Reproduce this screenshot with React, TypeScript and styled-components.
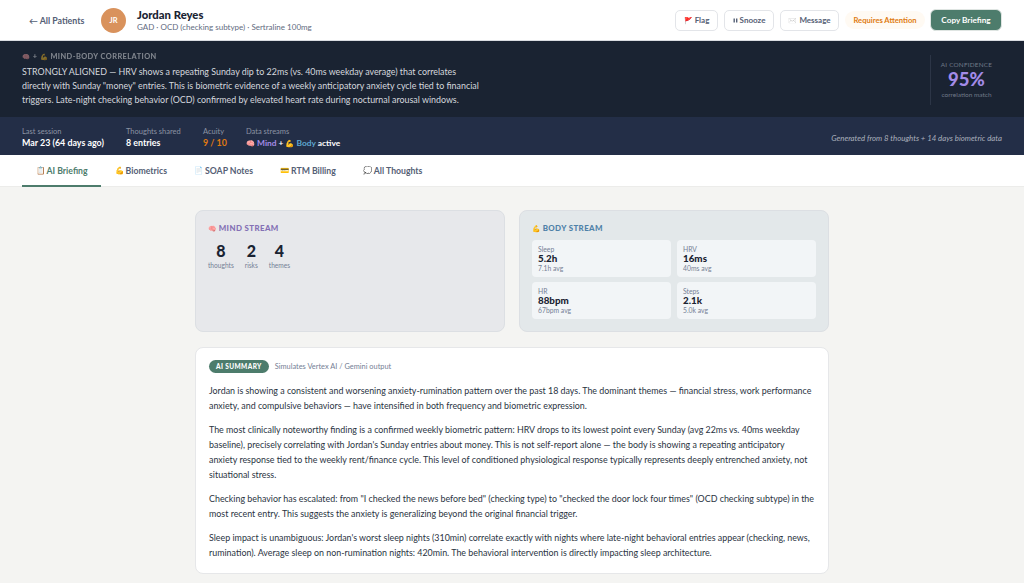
import React from 'react'
import styled, { createGlobalStyle } from 'styled-components'

const font = `Lato, "Noto Sans", "Liberation Sans", sans-serif`

const GlobalStyle = createGlobalStyle`
  html, body { margin: 0; padding: 0; height: 100%; background: #f4f4f2; overflow: hidden; }
  body { font-family: ${font}; color: #1a2332; }
  * { box-sizing: border-box; }
`

const Page = styled.div`
  display: flex;
  flex-direction: column;
  height: 583px;
  overflow: hidden;
`

const Emoji = styled.span<{ $muted?: boolean }>`
  font-size: 0.86em;
  ${p => p.$muted && 'filter: grayscale(1);'}
`

const TopBar = styled.header`
  display: flex;
  align-items: center;
  height: 41px;
  padding: 0 22px 0 29px;
  background: #fff;
  border-bottom: 1px solid #d9dce1;
`

const BackLink = styled.a`
  width: 72px;
  font-size: 8.8px;
  font-weight: 700;
  color: #556075;
`

const Avatar = styled.div`
  display: flex;
  align-items: center;
  justify-content: center;
  width: 25px;
  height: 25px;
  margin-right: 11px;
  border-radius: 50%;
  background: #d9925c;
  color: #fff;
  font-size: 7.5px;
  font-weight: 700;
`

const PatientInfo = styled.div`
  flex: 1;
`

const PatientName = styled.div`
  font-size: 11.3px;
  line-height: 14px;
  font-weight: 900;
  color: #1a2332;
`

const PatientMeta = styled.div`
  font-size: 8px;
  line-height: 11px;
  color: #5f6b80;
`

const Actions = styled.div`
  display: flex;
  align-items: center;
`

const ActionButton = styled.button<{ $width: number }>`
  display: flex;
  align-items: center;
  justify-content: center;
  gap: 2px;
  width: ${p => p.$width}px;
  height: 21px;
  margin-right: 6px;
  padding: 0;
  border: 1px solid #e3e5e9;
  border-radius: 5px;
  background: #fff;
  color: #556075;
  font-family: ${font};
  font-size: 8px;
  font-weight: 700;
`

const AttentionPill = styled.span`
  display: flex;
  justify-content: center;
  width: 80px;
  margin-right: 5px;
  padding: 4px 0;
  border-radius: 10px;
  background: #fffaf3;
  color: #e07b10;
  font-size: 7.6px;
  font-weight: 700;
`

const CopyButton = styled.button`
  width: 72px;
  height: 22px;
  padding: 0;
  border: 1px solid #dfe5e2;
  border-radius: 6px;
  background: #4d7c6c;
  color: #fff;
  font-family: ${font};
  font-size: 8.2px;
  font-weight: 700;
`

const CorrelationBand = styled.section`
  display: flex;
  justify-content: space-between;
  height: 76px;
  padding: 11px 22px 0;
  background: #1a2332;
`

const CorrelationLabel = styled.div`
  font-size: 7.4px;
  line-height: 10px;
  font-weight: 700;
  letter-spacing: 0.45px;
  color: #fff;
  opacity: 0.45;
`

const CorrelationText = styled.p`
  width: 470px;
  margin: 3px 0 0;
  font-size: 8.9px;
  line-height: 14px;
  white-space: nowrap;
  color: #d5d8de;
`

const ConfidenceBox = styled.div`
  display: flex;
  flex-direction: column;
  align-items: center;
  align-self: flex-start;
  width: 72px;
  height: 50px;
  margin-top: 3px;
  padding-top: 5px;
  border-left: 1px solid #2c3546;
`

const ConfidenceLabel = styled.div`
  font-size: 6.4px;
  line-height: 9px;
  letter-spacing: 0.2px;
  color: #717a89;
`

const ConfidenceValue = styled.div`
  font-size: 18.5px;
  line-height: 20px;
  font-weight: 900;
  color: #a38be8;
`

const ConfidenceSub = styled.div`
  margin-top: 2px;
  font-size: 6.5px;
  line-height: 8px;
  color: #717a89;
`

const MetaBand = styled.section`
  display: flex;
  align-items: center;
  height: 38px;
  padding: 4px 22px 0;
  background: #232e47;
`

const MetaItem = styled.div<{ $width: number }>`
  width: ${p => p.$width}px;
`

const MetaLabel = styled.div`
  font-size: 7.5px;
  line-height: 10px;
  color: #8b93a3;
`

const MetaValue = styled.div<{ $color?: string }>`
  font-size: 8.9px;
  line-height: 12px;
  font-weight: 700;
  color: ${p => p.$color || '#fff'};
`

const StreamsValue = styled(MetaValue)`
  font-size: 8.4px;
`

const Accent = styled.span<{ $color: string }>`
  color: ${p => p.$color};
`

const Generated = styled.div`
  margin-left: auto;
  font-size: 7.8px;
  font-style: italic;
  color: #aab0bc;
`

const Tabs = styled.nav`
  display: flex;
  height: 32px;
  padding: 0 22px;
  background: #fff;
  border-bottom: 1px solid #ececea;
`

const Tab = styled.a<{ $active?: boolean }>`
  display: flex;
  align-items: center;
  gap: 2px;
  height: 32px;
  padding: 0 13.5px;
  font-size: 8.7px;
  font-weight: 700;
  color: ${p => (p.$active ? '#4d7c6c' : '#556075')};
  border-bottom: 2px solid ${p => (p.$active ? '#4d7c6c' : 'transparent')};
`

const Content = styled.main`
  display: flex;
  flex-direction: column;
  gap: 15px;
  width: 634px;
  margin: 23px auto 0;
`

const Streams = styled.div`
  display: grid;
  grid-template-columns: 1fr 1fr;
  gap: 14px;
`

const StreamCard = styled.div<{ $bg: string }>`
  height: 122px;
  padding: 12px 12px 0;
  border: 1px solid #dcdfe3;
  border-radius: 8px;
  background: ${p => p.$bg};
`

const StreamTitle = styled.div<{ $color: string }>`
  font-size: 7.9px;
  line-height: 10px;
  font-weight: 900;
  letter-spacing: 0.4px;
  color: ${p => p.$color};
`

const Counts = styled.div`
  display: flex;
  gap: 11px;
  margin-top: 8px;
`

const Count = styled.div`
  text-align: center;
`

const CountValue = styled.div`
  font-size: 16px;
  line-height: 20px;
  font-weight: 900;
`

const CountLabel = styled.div`
  font-size: 6.6px;
  line-height: 9px;
  color: #758095;
`

const MetricGrid = styled.div`
  display: grid;
  grid-template-columns: 1fr 1fr;
  gap: 5px 6px;
  margin-top: 7px;
`

const Metric = styled.div`
  height: 37px;
  padding: 5px 6px 0;
  border-radius: 4px;
  background: #f2f5f7;
`

const MetricLabel = styled.div`
  font-size: 6.8px;
  line-height: 8px;
  color: #758095;
`

const MetricValue = styled.div`
  font-size: 9.8px;
  line-height: 11px;
  font-weight: 900;
`

const MetricSub = styled.div`
  font-size: 6.8px;
  line-height: 9px;
  color: #758095;
`

const SummaryCard = styled.article`
  height: 227px;
  padding: 12px 13px 0;
  border: 1px solid #e6e7e9;
  border-radius: 8px;
  background: #fff;
`

const SummaryHead = styled.div`
  display: flex;
  align-items: center;
  gap: 6px;
  margin-bottom: 10px;
`

const SummaryBadge = styled.span`
  padding: 1px 7px;
  border-radius: 7px;
  background: #4d7c6c;
  color: #fff;
  font-size: 6.5px;
  line-height: 11px;
  font-weight: 900;
  letter-spacing: 0.4px;
`

const SummaryNote = styled.span`
  font-size: 7.4px;
  color: #758095;
`

const SummaryText = styled.p`
  margin: 0 0 9px;
  font-size: 8.9px;
  line-height: 15px;
  white-space: nowrap;
  color: #2a3342;
`

const PauseIcon = () => (
  <svg width="5" height="5" viewBox="0 0 5 5" aria-hidden="true">
    <rect x="0.5" y="0.5" width="1.4" height="4" fill="#556075" />
    <rect x="3" y="0.5" width="1.4" height="4" fill="#556075" />
  </svg>
)

export default function App() {
  return (
    <Page>
      <GlobalStyle />
      <TopBar>
        <BackLink>← All Patients</BackLink>
        <Avatar>JR</Avatar>
        <PatientInfo>
          <PatientName>Jordan Reyes</PatientName>
          <PatientMeta>GAD · OCD (checking subtype) · Sertraline 100mg</PatientMeta>
        </PatientInfo>
        <Actions>
          <ActionButton $width={43}><Emoji>🚩</Emoji> Flag</ActionButton>
          <ActionButton $width={50}><PauseIcon /> Snooze</ActionButton>
          <ActionButton $width={59}><Emoji $muted>✉️</Emoji> Message</ActionButton>
          <AttentionPill>Requires Attention</AttentionPill>
          <CopyButton>Copy Briefing</CopyButton>
        </Actions>
      </TopBar>
      <CorrelationBand>
        <div>
          <CorrelationLabel><Emoji>🧠</Emoji> + <Emoji>💪</Emoji> MIND-BODY CORRELATION</CorrelationLabel>
          <CorrelationText>
            STRONGLY ALIGNED — HRV shows a repeating Sunday dip to 22ms (vs. 40ms weekday average) that correlates
            <br />
            directly with Sunday "money" entries. This is biometric evidence of a weekly anticipatory anxiety cycle tied
            to financial
            <br />
            triggers. Late-night checking behavior (OCD) confirmed by elevated heart rate during nocturnal arousal
            windows.
          </CorrelationText>
        </div>
        <ConfidenceBox>
          <ConfidenceLabel>AI CONFIDENCE</ConfidenceLabel>
          <ConfidenceValue>95%</ConfidenceValue>
          <ConfidenceSub>correlation match</ConfidenceSub>
        </ConfidenceBox>
      </CorrelationBand>
      <MetaBand>
        <MetaItem $width={104}>
          <MetaLabel>Last session</MetaLabel>
          <MetaValue>Mar 23 (64 days ago)</MetaValue>
        </MetaItem>
        <MetaItem $width={77}>
          <MetaLabel>Thoughts shared</MetaLabel>
          <MetaValue>8 entries</MetaValue>
        </MetaItem>
        <MetaItem $width={43}>
          <MetaLabel>Acuity</MetaLabel>
          <MetaValue $color="#e07b10">9 / 10</MetaValue>
        </MetaItem>
        <MetaItem $width={120}>
          <MetaLabel>Data streams</MetaLabel>
          <StreamsValue>
            <Emoji>🧠</Emoji> <Accent $color="#a38be8">Mind</Accent> + <Emoji>💪</Emoji>{' '}
            <Accent $color="#5fa8d3">Body</Accent> active
          </StreamsValue>
        </MetaItem>
        <Generated>Generated from 8 thoughts + 14 days biometric data</Generated>
      </MetaBand>
      <Tabs>
        <Tab $active><Emoji>📋</Emoji> AI Briefing</Tab>
        <Tab><Emoji>💪</Emoji> Biometrics</Tab>
        <Tab><Emoji>📄</Emoji> SOAP Notes</Tab>
        <Tab><Emoji>💳</Emoji> RTM Billing</Tab>
        <Tab><Emoji>💭</Emoji> All Thoughts</Tab>
      </Tabs>
      <Content>
        <Streams>
          <StreamCard $bg="#e7e8eb">
            <StreamTitle $color="#8470b5"><Emoji>🧠</Emoji> MIND STREAM</StreamTitle>
            <Counts>
              <Count>
                <CountValue>8</CountValue>
                <CountLabel>thoughts</CountLabel>
              </Count>
              <Count>
                <CountValue>2</CountValue>
                <CountLabel>risks</CountLabel>
              </Count>
              <Count>
                <CountValue>4</CountValue>
                <CountLabel>themes</CountLabel>
              </Count>
            </Counts>
          </StreamCard>
          <StreamCard $bg="#e3e8ea">
            <StreamTitle $color="#4f81a8"><Emoji>💪</Emoji> BODY STREAM</StreamTitle>
            <MetricGrid>
              <Metric>
                <MetricLabel>Sleep</MetricLabel>
                <MetricValue>5.2h</MetricValue>
                <MetricSub>7.1h avg</MetricSub>
              </Metric>
              <Metric>
                <MetricLabel>HRV</MetricLabel>
                <MetricValue>16ms</MetricValue>
                <MetricSub>40ms avg</MetricSub>
              </Metric>
              <Metric>
                <MetricLabel>HR</MetricLabel>
                <MetricValue>88bpm</MetricValue>
                <MetricSub>67bpm avg</MetricSub>
              </Metric>
              <Metric>
                <MetricLabel>Steps</MetricLabel>
                <MetricValue>2.1k</MetricValue>
                <MetricSub>5.0k avg</MetricSub>
              </Metric>
            </MetricGrid>
          </StreamCard>
        </Streams>
        <SummaryCard>
          <SummaryHead>
            <SummaryBadge>AI SUMMARY</SummaryBadge>
            <SummaryNote>Simulates Vertex AI / Gemini output</SummaryNote>
          </SummaryHead>
          <SummaryText>
            Jordan is showing a consistent and worsening anxiety-rumination pattern over the past 18 days. The dominant
            themes — financial stress, work performance
            <br />
            anxiety, and compulsive behaviors — have intensified in both frequency and biometric expression.
          </SummaryText>
          <SummaryText>
            The most clinically noteworthy finding is a confirmed weekly biometric pattern: HRV drops to its lowest
            point every Sunday (avg 22ms vs. 40ms weekday
            <br />
            baseline), precisely correlating with Jordan's Sunday entries about money. This is not self-report alone —
            the body is showing a repeating anticipatory
            <br />
            anxiety response tied to the weekly rent/finance cycle. This level of conditioned physiological response
            typically represents deeply entrenched anxiety, not
            <br />
            situational stress.
          </SummaryText>
          <SummaryText>
            Checking behavior has escalated: from "I checked the news before bed" (checking type) to "checked the door
            lock four times" (OCD checking subtype) in the
            <br />
            most recent entry. This suggests the anxiety is generalizing beyond the original financial trigger.
          </SummaryText>
          <SummaryText>
            Sleep impact is unambiguous: Jordan's worst sleep nights (310min) correlate exactly with nights where
            late-night behavioral entries appear (checking, news,
            <br />
            rumination). Average sleep on non-rumination nights: 420min. The behavioral intervention is directly
            impacting sleep architecture.
          </SummaryText>
        </SummaryCard>
      </Content>
    </Page>
  )
}
